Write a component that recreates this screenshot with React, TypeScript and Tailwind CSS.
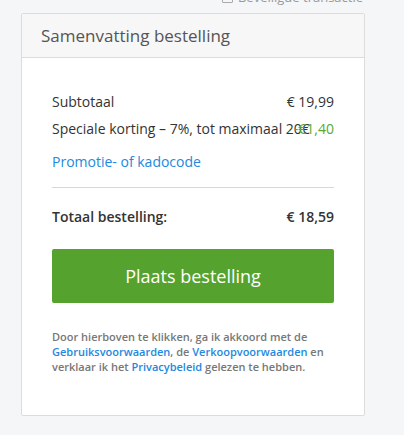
export default function App() {
  return (
    <div className="min-h-[435px] w-[404px] bg-[#f5f6f8] font-['Open_Sans',sans-serif] overflow-hidden">
      {/* secure transaction note, cut off at the top */}
      <div className="h-[13px] flex items-start justify-end pr-[41px]">
        <div className="-mt-[9px] flex items-center gap-[5px] text-[13px] leading-[13px] text-[#999]">
          <span className="inline-block w-[11px] h-[10px] border border-[#aaa] rounded-[1px]" />
          <span>Beveiligde transactie</span>
        </div>
      </div>

      <div className="ml-[21px] w-[344px] bg-white border border-[#dcdcdc] rounded-[2px]">
        <div className="h-[44px] bg-[#f7f7f7] border-b border-[#dcdcdc] flex items-center px-[19px]">
          <h2 className="text-[17px] text-[#555] leading-none">Samenvatting bestelling</h2>
        </div>

        <div className="px-[30px] pt-[34px] pb-[41px]">
          <div className="flex justify-between text-[14px] leading-[20px] text-[#333]">
            <span>Subtotaal</span>
            <span>€ 19,99</span>
          </div>
          <div className="flex mt-[7px] text-[14px] leading-[20px] text-[#333]">
            <span className="flex-1 min-w-0 whitespace-nowrap">Speciale korting – 7%, tot maximaal 20€</span>
            <span className="shrink-0 text-[#5aa832]">-€1,40</span>
          </div>
          <a className="block mt-[13px] text-[14px] leading-[20px] text-[#2189e0]">Promotie- of kadocode</a>

          <div className="mt-[15px] border-t border-[#d8d8d8]" />

          <div className="mt-[19px] flex justify-between text-[14px] leading-[20px] font-semibold text-[#333]">
            <span>Totaal bestelling:</span>
            <span>€ 18,59</span>
          </div>

          <button className="mt-[22px] w-full h-[54px] bg-[#56a22e] rounded-[2px] text-white text-[18px]">
            Plaats bestelling
          </button>

          <p className="mt-[26px] text-[11px] leading-[15px] text-[#777] font-semibold">
            Door hierboven te klikken, ga ik akkoord met de{" "}
            <a className="text-[#2189e0]">Gebruiksvoorwaarden</a>, de{" "}
            <a className="text-[#2189e0]">Verkoopvoorwaarden</a> en verklaar ik het{" "}
            <a className="text-[#2189e0]">Privacybeleid</a> gelezen te hebben.
          </p>
        </div>
      </div>
    </div>
  );
}
